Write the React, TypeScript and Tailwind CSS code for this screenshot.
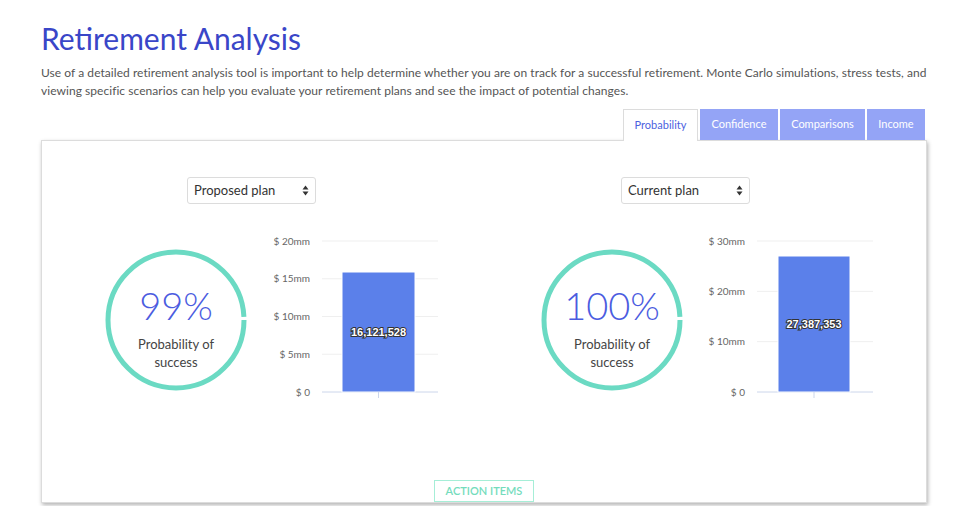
import React from "react";

const font = { fontFamily: "Lato, 'Noto Sans', sans-serif" };

function PlanSelect({ label }: { label: string }) {
  return (
    <div className="flex h-[27px] w-[129px] items-center justify-between rounded-[3px] border border-[#dcdcdc] bg-white pl-[6px] pr-[6px] text-[13px] text-[#333]">
      <span>{label}</span>
      <svg width="7" height="11" viewBox="0 0 7 11">
        <path d="M3.5 0.5 L6.5 4.5 H0.5 Z" fill="#333" />
        <path d="M3.5 10.5 L6.5 6.5 H0.5 Z" fill="#333" />
      </svg>
    </div>
  );
}

function Ring({ value }: { value: string }) {
  const r = 68;
  const c = 2 * Math.PI * r;
  return (
    <div className="relative h-[142px] w-[142px]">
      <svg width="142" height="142" viewBox="0 0 142 142">
        <circle
          cx="71"
          cy="71"
          r={r}
          fill="none"
          stroke="#6bdac3"
          strokeWidth="5"
          strokeDasharray={`${c - 4} 4`}
        />
      </svg>
      <div className="absolute inset-0 flex flex-col items-center pt-[36px]">
        <div className="text-[38px] font-light leading-[40px] text-[#4b5ce0]">{value}</div>
        <div className="mt-[10px] text-center text-[13px] leading-[18px] text-[#444]">
          Probability of
          <br />
          success
        </div>
      </div>
    </div>
  );
}

type ChartProps = {
  ticks: string[];
  barX: number;
  barW: number;
  barTop: number;
  label: string;
};

function BarChart({ ticks, barX, barW, barTop, label }: ChartProps) {
  const top = 9;
  const bottom = 160;
  const step = (bottom - top) / (ticks.length - 1);
  const cx = barX + barW / 2;
  return (
    <svg width="180" height="170" viewBox="0 0 180 170">
      {ticks.map((t, i) => {
        const y = top + i * step;
        const last = i === ticks.length - 1;
        return (
          <g key={t}>
            <line x1="60" x2="176" y1={y} y2={y} stroke={last ? "#ccd6eb" : "#efefef"} strokeWidth="1" />
            <text x="48" y={y + 3.5} textAnchor="end" fontSize="10" fill="#666" style={font}>
              {t}
            </text>
          </g>
        );
      })}
      <rect x={barX} y={barTop} width={barW} height={bottom - barTop} fill="#5b80ea" stroke="#fff" strokeWidth="1" />
      <line x1={cx} x2={cx} y1={bottom} y2={bottom + 6} stroke="#ccd6eb" />
      <text
        x={cx}
        y={(barTop + bottom) / 2 + 4}
        textAnchor="middle"
        fontSize="11"
        fontWeight="bold"
        fill="#fff"
        stroke="#333"
        strokeWidth="2"
        paintOrder="stroke"
        style={{ fontFamily: "'Liberation Sans', Arial, sans-serif" }}
      >
        {label}
      </text>
    </svg>
  );
}

const tabs = ["Probability", "Confidence", "Comparisons", "Income"];

export default function App() {
  return (
    <div className="h-[506px] w-[960px] overflow-hidden bg-white" style={font}>
      <div className="px-[41px] pt-[20px]">
        <h1 className="text-[30px] leading-[36px] text-[#3a46c8]">Retirement Analysis</h1>
        <p className="mt-[8px] text-[12px] leading-[18px] tracking-[0.05px] text-[#555]">
          <span className="block whitespace-nowrap">
            Use of a detailed retirement analysis tool is important to help determine whether you are on track for a
            successful retirement. Monte Carlo simulations, stress tests, and
          </span>
          <span className="block whitespace-nowrap">
            viewing specific scenarios can help you evaluate your retirement plans and see the impact of potential
            changes.
          </span>
        </p>

        <div className="mt-[9px] flex w-[886px] justify-end pr-[2px]">
          <div className="flex gap-[2px]">
            {tabs.map((t, i) =>
              i === 0 ? (
                <div
                  key={t}
                  className="relative z-10 -mb-px flex h-[32px] w-[75px] items-center justify-center border border-b-0 border-[#dcdcdc] bg-white text-[11px] text-[#4c5fe0]"
                >
                  {t}
                </div>
              ) : (
                <div
                  key={t}
                  className={`flex h-[31px] items-center justify-center bg-[#94a4f6] text-[11px] text-white ${
                    i === 1 ? "w-[78px]" : i === 2 ? "w-[85px]" : "w-[58px]"
                  }`}
                >
                  {t}
                </div>
              )
            )}
          </div>
        </div>

        <div className="flex h-[363px] w-[886px] flex-col border border-[#dcdcdc] bg-white shadow-[1px_2px_4px_rgba(0,0,0,0.3)]">
          <div className="grid grid-cols-2 pt-[36px]">
            <div className="flex flex-col">
              <div className="pl-[145px]">
                <PlanSelect label="Proposed plan" />
              </div>
              <div className="mt-[28px] flex items-start pl-[63px]">
                <div className="mt-[17px]">
                  <Ring value="99%" />
                </div>
                <div className="ml-[15px]">
                  <BarChart
                    ticks={["$ 20mm", "$ 15mm", "$ 10mm", "$ 5mm", "$ 0"]}
                    barX={80}
                    barW={73}
                    barTop={40}
                    label="16,121,528"
                  />
                </div>
              </div>
            </div>
            <div className="flex flex-col">
              <div className="pl-[137px]">
                <PlanSelect label="Current plan" />
              </div>
              <div className="mt-[28px] flex items-start pl-[57px]">
                <div className="mt-[17px]">
                  <Ring value="100%" />
                </div>
                <div className="ml-[14px]">
                  <BarChart
                    ticks={["$ 30mm", "$ 20mm", "$ 10mm", "$ 0"]}
                    barX={81}
                    barW={72}
                    barTop={24}
                    label="27,387,353"
                  />
                </div>
              </div>
            </div>
          </div>
          <div className="mt-auto flex justify-center">
            <button className="h-[22px] w-[100px] border border-[#a6eed7] bg-white text-[11px] font-semibold text-[#74dcbc]">
              ACTION ITEMS
            </button>
          </div>
        </div>
      </div>
    </div>
  );
}
